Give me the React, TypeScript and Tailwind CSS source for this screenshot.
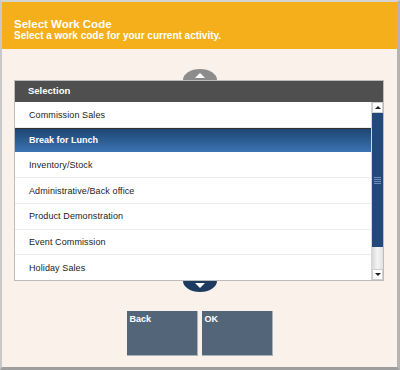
import React from 'react';

const codes = [
  'Commission Sales',
  'Break for Lunch',
  'Inventory/Stock',
  'Administrative/Back office',
  'Product Demonstration',
  'Event Commission',
  'Holiday Sales',
];

const selected = 'Break for Lunch';

function Tab({ up }: { up: boolean }) {
  return (
    <svg width="34" height="11" viewBox="0 0 34 11" className="block">
      {up ? (
        <>
          <path d="M0 11 A17 11 0 0 1 34 11 Z" fill="#8c8c8c" />
          <path d="M12 9 L17 4 L22 9 Z" fill="#fff" />
        </>
      ) : (
        <>
          <path d="M0 0 A17 11 0 0 0 34 0 Z" fill="#1c3b5f" />
          <path d="M12 2 L17 7 L22 2 Z" fill="#fff" />
        </>
      )}
    </svg>
  );
}

export default function App() {
  return (
    <div className="w-[400px] h-[370px] flex flex-col bg-[#fbf1eb] border-t-2 border-l-2 border-r-[3px] border-b-[3px] border-t-[#d4d4d4] border-l-[#c9c9c9] border-r-[#b4b4b4] border-b-[#9e9e9e] font-['Liberation_Sans',Arial,sans-serif] overflow-hidden">
      <div className="h-[47px] shrink-0 bg-[#f4af1b] px-[12px] pt-[16px] text-white font-bold">
        <div className="text-[11.5px] leading-[12px]">Select Work Code</div>
        <div className="text-[10px] leading-[11px]">Select a work code for your current activity.</div>
      </div>

      <div className="flex flex-col items-center pt-[20px]">
        <Tab up />

        <div className="ml-[12px] mr-[13px] self-stretch flex flex-col border border-[#bcbcbc]">
          <div className="h-[21px] bg-[#4f4f4f] text-white font-bold text-[9.5px] flex items-center pl-[13px]">Selection</div>
          <div className="flex h-[178px]">
            <div className="flex-1 flex flex-col bg-white">
              {codes.map((c) => (
                <div
                  key={c}
                  className={
                    c === selected
                      ? 'flex-1 flex items-center pl-[14px] pt-[1px] text-[9px] font-bold text-white bg-gradient-to-b from-[#1e4674] to-[#3b74b3] border-t border-t-[#333]'
                      : 'flex-1 flex items-center pl-[14px] pt-[2px] text-[9px] text-[#222] border-b border-b-[#ececec] last:border-b-0 tracking-[0.1px]'
                  }
                >
                  {c}
                </div>
              ))}
            </div>
            <div className="w-[12px] flex flex-col border-l border-l-[#d6d6d6]">
              <div className="h-[11px] bg-white border border-[#cfcfcf] flex items-center justify-center">
                <div className="w-0 h-0 border-l-[3px] border-r-[3px] border-b-[3px] border-l-transparent border-r-transparent border-b-[#222]" />
              </div>
              <div className="h-[134px] bg-[#23497a] flex flex-col items-center justify-center gap-[1px]">
                <div className="w-[7px] h-[1px] bg-[#6d8db5]" />
                <div className="w-[7px] h-[1px] bg-[#6d8db5]" />
                <div className="w-[7px] h-[1px] bg-[#6d8db5]" />
                <div className="w-[7px] h-[1px] bg-[#6d8db5]" />
              </div>
              <div className="flex-1 bg-gradient-to-r from-[#d8d8d8] via-[#f4f4f4] to-[#e2e2e2]" />
              <div className="h-[11px] bg-white border border-[#cfcfcf] flex items-center justify-center">
                <div className="w-0 h-0 border-l-[3px] border-r-[3px] border-t-[3px] border-l-transparent border-r-transparent border-t-[#222]" />
              </div>
            </div>
          </div>
        </div>

        <Tab up={false} />

        <div className="flex gap-[4px] mt-[19px]">
          <button className="w-[71px] h-[45px] bg-[#536679] border-r border-b border-[#a9b2bb] text-white font-bold text-[9px] flex items-start pl-[3px] pt-[2px]">Back</button>
          <button className="w-[71px] h-[45px] bg-[#536679] border-r border-b border-[#a9b2bb] text-white font-bold text-[9px] flex items-start pl-[3px] pt-[2px]">OK</button>
        </div>
      </div>
    </div>
  );
}
